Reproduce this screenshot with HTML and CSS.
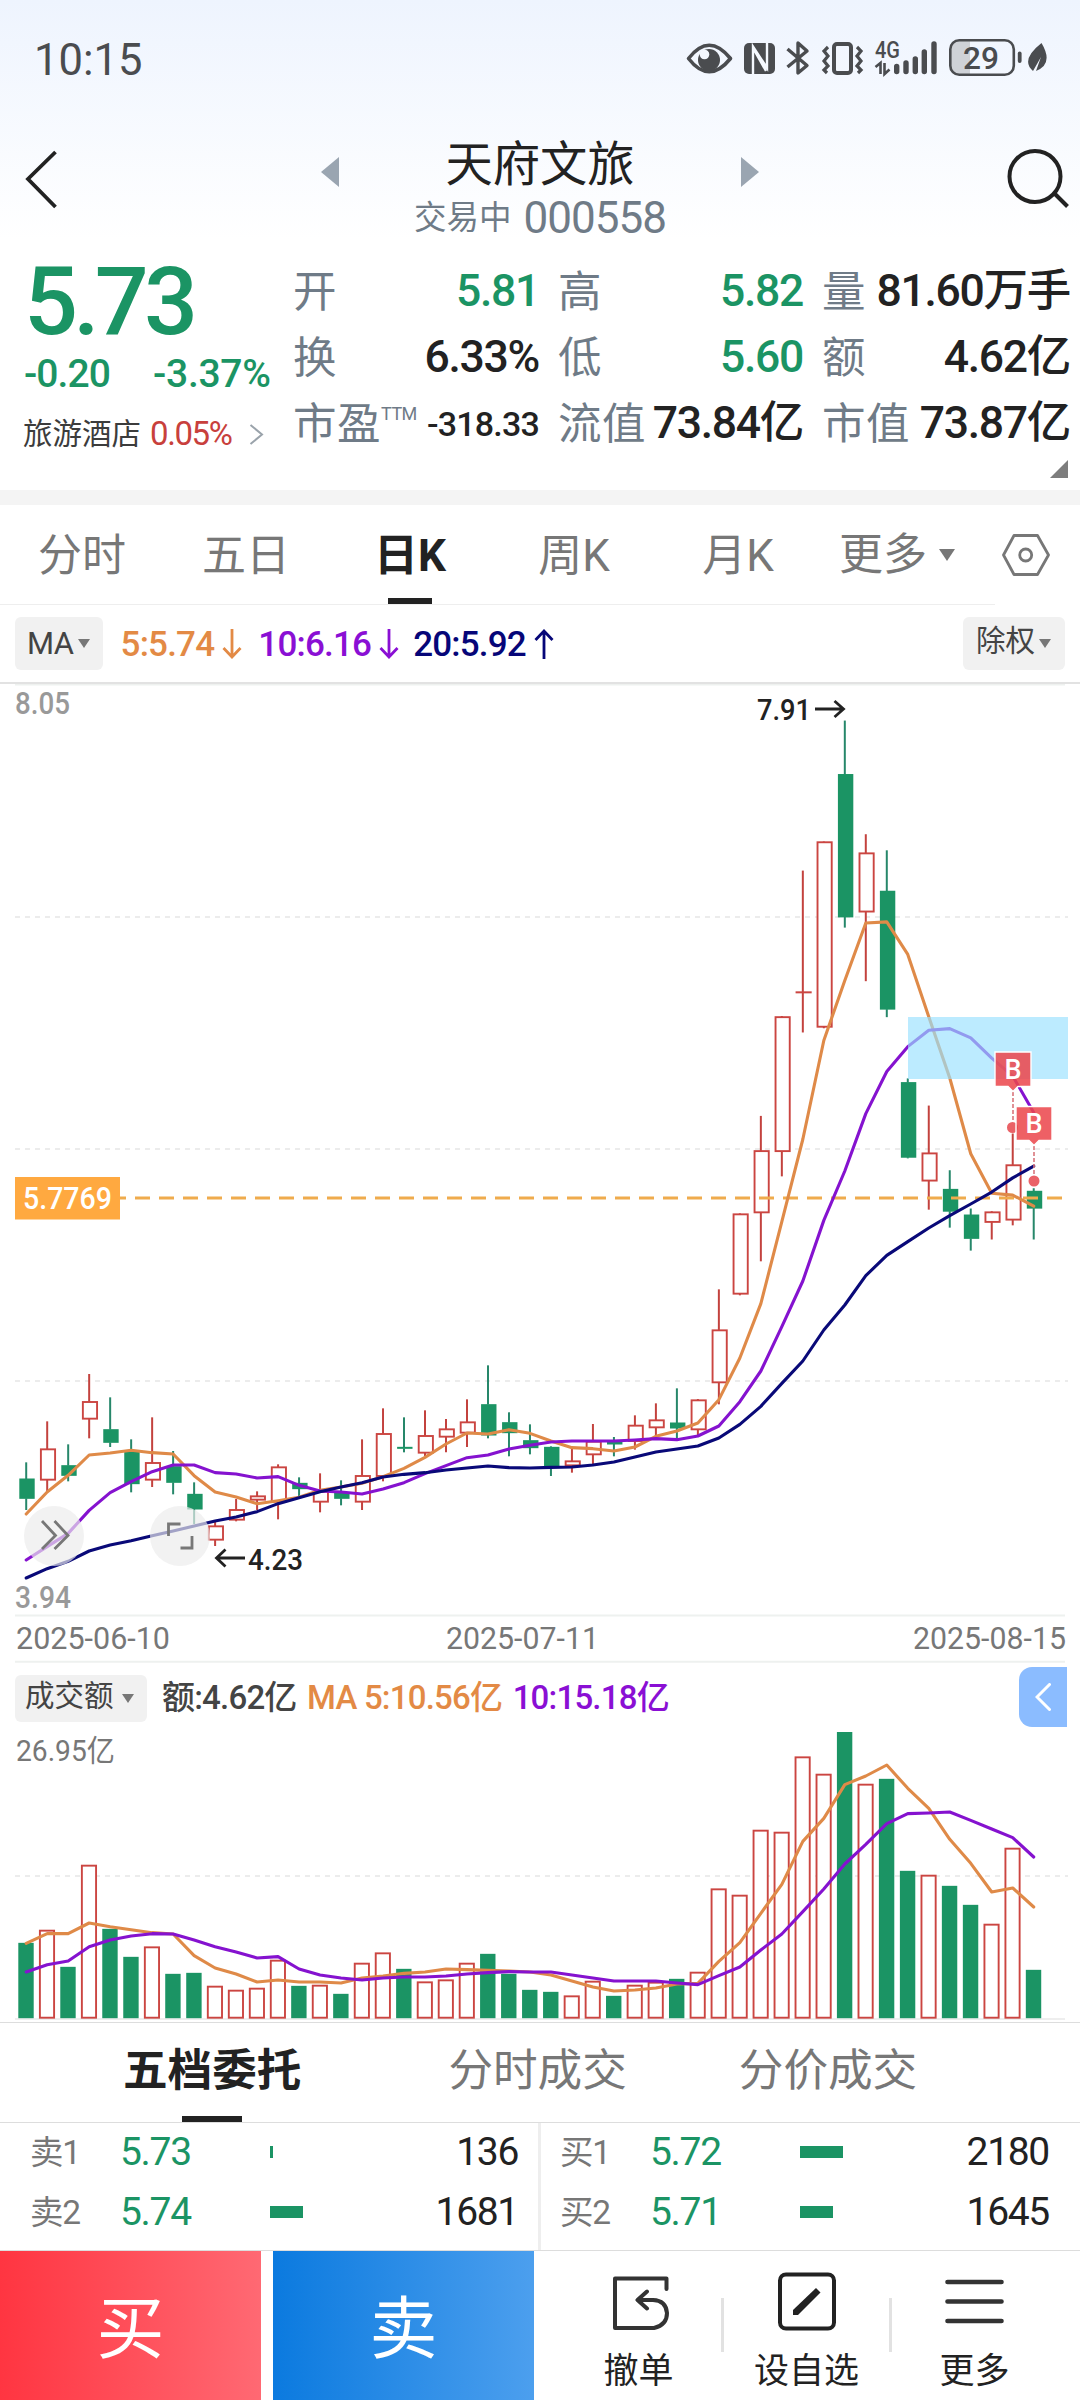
FILE: index.html
```html
<!DOCTYPE html>
<html lang="zh-CN">
<head>
<meta charset="utf-8">
<title>天府文旅 000558</title>
<link rel="stylesheet" href="styles.css">
</head>
<body>
<div class="top">
  <div class="status">
    <span class="clock">10:15</span>
    <svg class="status-icons" width="370" height="44" viewBox="682 36 370 44">
      <g fill="none" stroke="#4a4c4f" stroke-width="3.6">
        <path d="M688.500 58.500Q709 32 730.500 58.500Q709 85 688.500 58.500Z" stroke-linejoin="round"/>
        <path d="M787.500 49L807 65.500L798 73V43L807 51L787.500 67" stroke-width="3.400" stroke-linejoin="round"/>
        <rect x="834" y="44" width="17" height="29" rx="3" stroke-width="4"/>
        <path d="M828 47l-4 4 4 5-4 5 4 5-4 4 3 3M857 47l4 4-4 5 4 5-4 5 4 4-3 3" stroke-width="3.200"/>
      </g>
      <circle cx="709" cy="60" r="11" fill="#4a4c4f"/>
      <circle cx="704.500" cy="54.500" r="4.800" fill="#f4f8fe"/>
      <rect x="744" y="43" width="31" height="31" rx="5" fill="#4a4c4f"/>
      <path d="M753 74V46.500L767 68V43M753 48L766 71" fill="none" stroke="#f4f8fe" stroke-width="2.400"/>
      <text class="net" x="875" y="58" textLength="25" lengthAdjust="spacingAndGlyphs">4G</text>
      <g stroke="#4a4c4f" stroke-width="5.400" stroke-linecap="round">
        <path d="M896.700 66.500V71.500M906 63V71.500M915.300 59V71.500M924.300 52V71.500M934 44V71.500"/>
      </g>
      <path d="M875.500 67L880.500 63V74M884.500 63V74L889.500 69.500" fill="none" stroke="#4a4c4f" stroke-width="2.600"/>
      <path d="M959 41h11v34h-11q-8-1-8-9v-16q0-8 8-9z" fill="#cfd2d7"/>
      <rect x="950.300" y="40.300" width="63.500" height="34.500" rx="9" fill="none" stroke="#4a4c4f" stroke-width="2.600"/>
      <text class="batt" x="963" y="69" textLength="36" lengthAdjust="spacingAndGlyphs">29</text>
      <path d="M1019.700 53.500V61" stroke="#4a4c4f" stroke-width="3.800" stroke-linecap="round"/>
      <path d="M1041.500 43Q1054 64 1036 71L1041 57L1033 71Q1020 60 1041.500 43Z" fill="#4a4c4f"/>
    </svg>
  </div>
  <div class="header">
    <svg class="back" width="36" height="64" viewBox="24 147 36 64"><path d="M55.500 152L28 179L55.500 207" fill="none" stroke="#222" stroke-width="3.800"/></svg>
    <div class="title-nav">
      <svg width="18" height="30" viewBox="0 0 18 30"><path d="M18 0V30L0 15Z" fill="#9aa5b1"/></svg>
      <div class="title-box">
        <div class="title">天府文旅</div>
        <div class="subtitle">交易中 <span class="code">000558</span></div>
      </div>
      <svg width="18" height="30" viewBox="0 0 18 30"><path d="M0 0V30L18 15Z" fill="#9aa5b1"/></svg>
    </div>
    <svg class="search" width="66" height="64" viewBox="1004 147 66 64"><g fill="none" stroke="#222" stroke-width="4"><circle cx="1035" cy="176.500" r="25.500"/><path d="M1054 193L1067.500 206.500"/></g></svg>
  </div>
</div>

<div class="quote">
  <div class="last">
    <div class="price">5.73</div>
    <div class="change"><span>-0.20</span><span class="rate">-3.37%</span></div>
    <div class="sector"><span>旅游酒店</span><span class="pct">0.05%</span><svg width="15" height="21" viewBox="0 0 15 21"><path d="M1.500 1L13 10.500L1.500 20" fill="none" stroke="#9aa3ab" stroke-width="2"/></svg></div>
  </div>
  <div class="stats">
    <div class="stat"><span class="k">开</span><span class="v g">5.81</span></div>
    <div class="stat"><span class="k">高</span><span class="v g">5.82</span></div>
    <div class="stat"><span class="k">量</span><span class="v">81.60万手</span></div>
    <div class="stat"><span class="k">换</span><span class="v">6.33%</span></div>
    <div class="stat"><span class="k">低</span><span class="v g">5.60</span></div>
    <div class="stat"><span class="k">额</span><span class="v">4.62亿</span></div>
    <div class="stat"><span class="k">市盈<small>TTM</small></span><span class="v small">-318.33</span></div>
    <div class="stat"><span class="k">流值</span><span class="v">73.84亿</span></div>
    <div class="stat"><span class="k">市值</span><span class="v">73.87亿</span></div>
  </div>
  <svg class="corner" width="18" height="18" viewBox="0 0 18 18"><path d="M18 0V18H0Z" fill="#7d7d7d"/></svg>
</div>
<div class="band"></div>

<div class="periods">
  <div class="tab">分时</div>
  <div class="tab">五日</div>
  <div class="tab on">日K</div>
  <div class="tab">周K</div>
  <div class="tab">月K</div>
  <div class="tab more">更多<i class="tri"></i></div>
  <svg class="gear" width="52" height="46" viewBox="1000 532 52 46"><g fill="none" stroke="#777" stroke-width="2.800" stroke-linejoin="round"><path d="M1014 535.500H1037.500L1048.500 555L1037.500 574.500H1014L1003.500 555Z"/><circle cx="1025.700" cy="555" r="6"/></g></svg>
</div>

<div class="ma-row">
  <div class="chip">MA<i class="tri sm"></i></div>
  <div class="ma o">5:5.74<svg width="20" height="30" viewBox="0 0 20 30"><path d="M10 0V27M1.500 19L10 28L18.500 19" fill="none" stroke="currentColor" stroke-width="2.800"/></svg></div>
  <div class="ma p">10:6.16<svg width="20" height="30" viewBox="0 0 20 30"><path d="M10 0V27M1.500 19L10 28L18.500 19" fill="none" stroke="currentColor" stroke-width="2.800"/></svg></div>
  <div class="ma n">20:5.92<svg width="20" height="30" viewBox="0 0 20 30"><path d="M10 30V3M1.500 11L10 2L18.500 11" fill="none" stroke="currentColor" stroke-width="2.800"/></svg></div>
  <div class="chip right"><span>除权</span><i class="tri sm"></i></div>
</div>

<svg class="chart" width="1080" height="979" viewBox="0 684 1080 979">
  <g class="grid"><path d="M15 917H1068M15 1149H1068M15 1381H1068"/></g>
  <path d="M15 684.500H1065M15 1615.500H1065M15 1661.700H1065" stroke="#eef1ef" stroke-width="2"/>
  <g id="candles"></g>
  <path d="M15 1198H1062" stroke="#efab4d" stroke-width="3" stroke-dasharray="15 9"/>
  <g id="price-lines"></g>
  <rect x="908" y="1017" width="160" height="62" fill="rgba(153,224,255,.66)"/>
  <g class="mark">
    <path class="lead" d="M1013 1092V1122"/><circle cx="1012.500" cy="1127.500" r="5.500"/>
    <path class="flag" d="M995 1052H1031V1086.500H1018L1013 1091.500L1008 1086.500H995Z"/>
    <text x="1013" y="1078.500">B</text>
    <path class="lead" d="M1034 1146V1176"/><circle cx="1034" cy="1181" r="5.500"/>
    <path class="flag" d="M1016 1106.500H1052V1140.500H1039L1034 1145.500L1029 1140.500H1016Z"/>
    <text x="1034" y="1133">B</text>
  </g>
  <rect x="15" y="1177" width="105" height="42.500" fill="#ffa940"/>
  <text class="tag" x="23" y="1209" textLength="89" lengthAdjust="spacingAndGlyphs">5.7769</text>
  <text class="axis" x="15" y="714" textLength="55" lengthAdjust="spacingAndGlyphs">8.05</text>
  <text class="axis" x="15" y="1608" textLength="56" lengthAdjust="spacingAndGlyphs">3.94</text>
  <text class="ext" x="757" y="720" textLength="54" lengthAdjust="spacingAndGlyphs">7.91</text>
  <text class="ext" x="248" y="1570" textLength="55" lengthAdjust="spacingAndGlyphs">4.23</text>
  <path d="M815 709H843M834.500 701L843.500 709L834.500 717M245 1558H217M225.500 1549.500L216.500 1558L225.500 1566.500" fill="none" stroke="#222" stroke-width="2.800"/>
  <text class="date" x="16" y="1649" textLength="154" lengthAdjust="spacingAndGlyphs">2025-06-10</text>
  <text class="date" x="446" y="1649" textLength="153" lengthAdjust="spacingAndGlyphs">2025-07-11</text>
  <text class="date" x="913" y="1649" textLength="153" lengthAdjust="spacingAndGlyphs">2025-08-15</text>
  <g fill="rgba(236,236,236,.68)"><circle cx="54" cy="1536" r="30"/><circle cx="180" cy="1536" r="30"/></g>
  <path d="M42 1521L55.500 1535.500L42 1549M54.500 1521L68 1535.500L54.500 1549M168.500 1536V1524H180.500M180.500 1548H192V1536" fill="none" stroke="#777" stroke-width="2.800"/>
</svg>

<div class="vol-head">
  <div class="chip vol"><span>成交额</span><i class="tri sm"></i></div>
  <span class="amt">额:4.62亿</span><span class="amt o">MA 5:10.56亿</span><span class="amt p">10:15.18亿</span>
  <div class="drawer"><svg width="16" height="28" viewBox="0 0 16 28"><path d="M14.500 1.500L2 14L14.500 26.500" fill="none" stroke="#fff" stroke-width="3" stroke-linecap="round"/></svg></div>
</div>
<svg class="chart" width="1080" height="290" viewBox="0 1732 1080 290">
  <g class="grid"><path d="M15 1876H1068"/></g>
  <path d="M15 2019H1065" stroke="#eee" stroke-width="2"/>
  <g id="volumes"></g>
  <g id="volume-lines"></g>
  <text class="volmax" x="16" y="1761" textLength="99" lengthAdjust="spacingAndGlyphs">26.95亿</text>
</svg>

<div class="book-tabs">
  <div class="btab on">五档委托</div><div class="btab b2">分时成交</div><div class="btab b3">分价成交</div>
</div>
<div class="book">
  <div class="side">
    <div class="order"><span class="lv">卖1</span><span class="px">5.73</span><span class="bar"><i style="width:3px"></i></span><span class="qty">136</span></div>
    <div class="order"><span class="lv">卖2</span><span class="px">5.74</span><span class="bar"><i style="width:33px"></i></span><span class="qty">1681</span></div>
  </div>
  <div class="side buy">
    <div class="order"><span class="lv">买1</span><span class="px">5.72</span><span class="bar"><i style="width:43px"></i></span><span class="qty">2180</span></div>
    <div class="order"><span class="lv">买2</span><span class="px">5.71</span><span class="bar"><i style="width:33px"></i></span><span class="qty">1645</span></div>
  </div>
</div>

<div class="actions">
  <div class="btn buy-btn">买</div>
  <div class="btn sell-btn">卖</div>
  <div class="tools">
    <div class="tool"><svg width="60" height="62" viewBox="610 2271 60 62"><g fill="none" stroke="#333" stroke-width="4" stroke-linecap="round" stroke-linejoin="round"><path d="M667.500 2289V2278.500H616V2328H655Q668 2325 668 2313Q667 2300.500 654 2300H639M648 2291.500L638.500 2300L648 2308.500"/></g></svg><span>撤单</span></div>
    <i class="sep"></i>
    <div class="tool"><svg width="60" height="62" viewBox="777 2271 60 62"><rect x="780" y="2274.500" width="54" height="54" rx="6" fill="none" stroke="#222" stroke-width="4"/><path d="M793 2315V2310L816 2288L820.500 2292.500L798 2315Z" fill="#222"/></svg><span>设自选</span></div>
    <i class="sep"></i>
    <div class="tool"><svg width="60" height="62" viewBox="944.500 2271 60 62"><path d="M947 2282H1001M947 2301.500H1001M947 2321H1001" stroke="#333" stroke-width="4.600" stroke-linecap="round"/></svg><span>更多</span></div>
  </div>
</div>
<script src="chart.js"></script>
</body>
</html>
```
FILE: styles.css
```css
* { box-sizing: border-box; }
body {
  margin: 0;
  width: 1080px;
  height: 2400px;
  overflow: hidden;
  background: #fff;
  color: #222;
  font-family: Roboto, "Noto Sans CJK SC", sans-serif;
}
svg { display: block; flex: none; }
.top { height: 250px; background: linear-gradient(#eef4fe, #fff 240px); }
.status { height: 84px; display: flex; justify-content: space-between; padding: 36px 28px 0 34px; }
.clock { font-size: 43.5px; line-height: 50px; color: #4a4c4f; }
.net { font-size: 23px; font-weight: 500; fill: #4a4c4f; }
.batt { font-size: 32px; font-weight: 500; fill: #4a4c4f; }
.header { height: 166px; display: flex; justify-content: space-between; padding: 0 10px 0 24px; }
.back, .search { margin-top: 63px; }
.title-nav { display: flex; width: 438px; justify-content: space-between; margin-left: 16px; }
.title-nav > svg { margin-top: 73px; }
.title-box { text-align: center; margin-top: 50px; }
.title { font-size: 47.3px; line-height: 62px; height: 59px; }
.subtitle { font-size: 32.5px; line-height: 50px; color: #6f7b87; white-space: nowrap; display: flex; align-items: center; justify-content: center; gap: 12px; }
.code { font-size: 44px; letter-spacing: -1px; }

.quote { height: 240px; display: flex; position: relative; }
.last { width: 293px; padding-left: 24px; color: #1b9464; }
.price { font-size: 95px; line-height: 103px; height: 102px; font-weight: 500; letter-spacing: -4.8px; }
.change { display: flex; gap: 43px; font-size: 39px; font-weight: 500; line-height: 44px; letter-spacing: -.9px; }
.rate { letter-spacing: -.3px; }
.sector { display: flex; align-items: center; font-size: 29.5px; line-height: 44px; margin-top: 16px; margin-left: -1px; color: #3c3c3c; }
.pct { color: #c8403c; font-size: 33px; letter-spacing: -1.4px; margin: 0 17px 0 9px; }
.stats { display: grid; grid-template-columns: 245px 244px 247px; column-gap: 20px; grid-auto-rows: 66px; padding-top: 8px; }
.stat { display: flex; justify-content: space-between; line-height: 66px; white-space: nowrap; }
.k { font-size: 43.5px; color: #6f7b87; padding-top: 2px; letter-spacing: .5px; }
.k small { font-size: 18px; vertical-align: 19px; line-height: 1; letter-spacing: -.5px; }
.v { font-size: 44.5px; font-weight: 500; letter-spacing: -1.3px; margin-right: -1px; }
.v.g { color: #1b9464; }
.v.small { font-size: 34px; letter-spacing: -.8px; padding-top: 1px; }
.corner { position: absolute; right: 12px; bottom: 12px; }
.band { height: 15px; background: #f4f4f4; }

.periods { height: 100px; display: flex; align-items: center; background: linear-gradient(#eee, #eee) 0 99px / 995px 1px no-repeat; }
.tab { width: 164px; height: 100px; line-height: 102px; text-align: center; font-size: 44px; color: #777; position: relative; }
.tab.on { font-weight: 700; color: #222; }
.tab.on::after { content: ""; position: absolute; left: 60px; bottom: 1px; width: 44px; height: 6px; background: #222; }
.tab.more { display: flex; align-items: center; justify-content: center; gap: 12px; padding-right: 10px; }
.tri { display: block; flex: none; border: 8.5px solid transparent; border-top: 12px solid #777; border-bottom: 0; }
.tri.sm { border-width: 9px 6.5px 0; }
.gear { margin-left: 16px; }

.ma-row { height: 79px; display: flex; align-items: center; padding: 0 15px; border-bottom: 2px solid #e2e2e2; }
.chip { height: 53px; background: #f1f1f1; border-radius: 6px; display: flex; align-items: center; gap: 4px; padding: 0 13px 0 12px; font-size: 31px; color: #444; letter-spacing: -.5px; }
.chip span { line-height: 40px; margin-top: -5px; }
.chip.right { margin-left: auto; width: 102px; font-size: 29.5px; padding: 0 12px 0 13px; letter-spacing: 0; }
.ma { display: flex; align-items: center; gap: 8px; font-size: 35px; font-weight: 500; letter-spacing: -.8px; margin-left: 16px; padding-top: 1px; }
.chip + .ma { margin-left: 18px; }
.ma.n { margin-left: 14px; }
.o { color: #e38a45; }
.p { color: #8a0fd4; }
.n { color: #060678; }

.grid { fill: none; stroke: #ececec; stroke-width: 1.8; stroke-dasharray: 5 5; }
.axis { font-size: 31px; font-weight: 500; fill: #999; }
.ext { font-size: 30px; font-weight: 500; fill: #222; }
.date { font-size: 30.5px; fill: #777; }
.tag { font-size: 31px; font-weight: 500; fill: #fff; }
.volmax { font-size: 29.5px; fill: #777; }
.mark .flag { fill: rgba(235, 70, 76, .86); stroke: #fff; stroke-width: 1.4; }
.mark circle { fill: #ea6267; }
.mark .lead { stroke: #d9767c; stroke-width: 1.6; stroke-dasharray: 4 2; }
.mark text { font-size: 27px; font-weight: 500; fill: #fff; text-anchor: middle; }
.up { fill: #fff; stroke: #cb4541; stroke-width: 1.9; }
.wick { stroke-width: 2; }
.wick.r { stroke: #c3423e; }
.wick.d { stroke: #26876a; }
.down { fill: #1b9464; }
.line { fill: none; stroke-width: 3.1; stroke-linejoin: round; stroke-linecap: round; }
.line.ma5 { stroke: #df8a48; }
.line.ma10 { stroke: #8512cf; }
.line.ma20 { stroke: #090978; }

.vol-head { height: 69px; display: flex; align-items: center; padding: 0 13px 0 15px; }
.chip.vol { height: 47px; font-size: 29.5px; gap: 8px; padding: 0 13px 0 10px; margin-right: 15px; margin-top: 2px; letter-spacing: 0; width: 132px; }
.amt { font-size: 33px; font-weight: 500; letter-spacing: -.8px; margin-right: 10.5px; line-height: 40px; white-space: nowrap; }
.amt:not(.o):not(.p) { color: #444; }
.drawer { margin-left: auto; width: 48px; height: 60px; margin-top: -1px; background: #8bbcff; border-radius: 13px 0 0 13px; display: flex; align-items: center; justify-content: center; }

.book-tabs { height: 101px; display: flex; border-top: 1px solid #ddd; border-bottom: 1px solid #ddd; padding-left: 123px; }
.btab { font-size: 44.6px; line-height: 97px; color: #777; position: relative; }
.btab.on { color: #222; font-weight: 700; }
.btab.on::after { content: ""; position: absolute; left: 59px; bottom: 0; width: 60px; height: 6px; background: #222; }
.b2 { margin-left: 147px; }
.b3 { margin-left: 112px; }
.book { height: 128px; display: flex; border-bottom: 1px solid #ddd; }
.side { width: 541px; border-right: 3px solid #eee; padding: 0 20px 0 30px; }
.side.buy { width: 539px; border: 0; padding: 0 31px 0 19px; }
.order { display: grid; grid-template-columns: 90px 150px 60px 1fr; align-items: center; height: 60px; line-height: 55px; margin-top: -1px; margin-bottom: 1px; font-size: 39px; letter-spacing: -1.3px; }
.lv { color: #777; font-size: 33.5px; }
.px { color: #1b9464; }
.bar i { display: block; height: 12px; background: #1b9464; }
.qty { text-align: right; }

.actions { height: 149px; display: flex; }
.btn { width: 261px; font-size: 68px; line-height: 158px; text-align: center; color: #fff; }
.buy-btn { background: linear-gradient(90deg, #ff3541, #ff6973); margin-right: 12px; }
.sell-btn { background: linear-gradient(90deg, #0b7adf, #4c9fee); }
.tools { display: flex; padding-left: 22px; }
.tool { width: 165px; display: flex; flex-direction: column; align-items: center; padding-top: 20px; font-size: 35px; line-height: 46px; }
.tool span { margin-top: 16px; }
.sep { width: 3px; height: 54px; margin-top: 47px; background: #e2e2e2; }
```
FILE: chart.js
```js
const cx = i => 26.2 + 20.99 * i;

// Blocks of plotted values share an origin and a unit: y = origin + value / unit.
const block = (origin, unit, rows) =>
  rows.map(r => Array.isArray(r)
    ? [r[0], ...r.slice(1).map(v => origin + v / unit)]
    : origin + r / unit);

// [direction, high, body top, body bottom, low]
const candles = [
  ...block(1320, 3, [
    ['d',427,477,535,570], ['r',304,388,479,513], ['d',373,437,466,484], ['r',162,246,296,355],
    ['d',232,329,367,381], ['d',358,395,491,517], ['r',292,429,479,501], ['d',393,440,487,523],
    ['d',487,523,567,612], ['r',606,619,659,678], ['r',537,570,599,604], ['r',514,529,539,570],
    ['r',433,442,545,598], ['d',472,490,506,530], ['r',460,515,545,577], ['d',481,518,535,556],
    ['r',358,468,545,570], ['r',265,342,468,484], ['d',292,382,385,397], ['r',271,348,398,408],
    ['r',297,328,350,397], ['r',238,307,338,381], ['d',136,254,345,355], ['d',277,308,338,409],
    ['d',313,362,383,403]]),
  ...block(1180, 3, [
    ['d',799,802,857,888], ['r',805,844,856,878], ['r',732,785,823,857], ['d',771,786,792,829],
    ['r',706,737,783,809], ['r',670,721,742,771], ['d',625,729,744,780], ['r',657,661,748,766],
    ['r',328,451,607,673], ['r',100,103,341,346]]),
  ...block(680, 2.613, [
    ['r',1139,1231,1391,1519], ['r',878,881,1231,1297], ['r',498,816,816,921], ['r',422,424,906,910],
    ['d',106,247,619,647], ['r',403,453,605,787], ['d',445,552,860,881], ['d',1041,1052,1247,1250],
    ['r',1112,1237,1308,1384], ['d',1281,1331,1388,1431], ['d',1381,1398,1459,1491],
    ['r',1388,1391,1416,1462], ['r',1185,1268,1410,1425], ['d',1328,1336,1380,1462]])
];

const ma5 = [
  ...block(1320, 3, [582,516,466,405,399,391,398,402,467,516,531,551,542,532,511,501,490,470,445,412,372,339,342,329,340]),
  ...block(1180, 3, [783,803,806,813,801,769,753,729,659,534,371]),
  ...block(680, 2.613, [1415,1200,942,785,635,632,717,880,1040,1238,1341,1346,1375])];
const ma10 = [
  ...block(1320, 3, [720,680,640,571,518,485,455,435,435,458,462,474,470,496,513,516,522,507,488,461,437,413,405,387,376]),
  ...block(1180, 3, [786,783,783,783,780,776,779,768,738,665,573,440,303]),
  ...block(680, 2.613, [1412,1283,1133,1023,958,915,911,935,988,1035,1130])];
const ma20 = [
  ...block(1320, 3, [774,746,724,693,675,662,647,633,618,603,591,575,551,533,515,501,488,471,463,458,450,444,438,443,444]),
  ...block(1180, 3, [862,861,855,846,831,816,807,798,774,733,679,610,543,450,375,287,226,185,144,107,72]),
  ...block(680, 2.613, [1338,1301,1270])];

const volumes = block(1650, 3, [
  880,842,952,647,838,922,892,973,970,1010,1022,1016,932,1009,1007,1033,941,910,958,997,991,941,913,973,1021,
  1027,1039,995,1039,1007,998,988,968,718,737,542,548,322,374,247,404,388,664,677,709,766,824,596,961]);
const vol5 = block(1650, 3, [
  880,851,851,819,830,839,848,852,917,954,972,996,990,996,996,999,984,978,970,966,957,959,961,963,966,
  975,993,1011,1023,1020,1014,1002,1000,934,878,790,703,574,505,404,378,345,415,475,568,640,726,714,771]);
const vol10 = block(1650, 3, [
  966,944,933,890,870,858,851,852,870,890,906,924,920,957,975,984,990,984,981,981,978,972,968,965,966,
  966,975,984,993,993,993,999,1004,977,951,900,852,785,717,642,583,521,491,489,486,511,537,563,621]);

const wick = (x, a, b, dir) => `<path class="wick ${dir}" d="M${x} ${a}V${b}"/>`;
const body = (x, a, b, dir) => dir === 'r'
  ? `<rect class="up" x="${x - 7}" y="${a}" width="14.2" height="${Math.max(b - a, 0.1)}"/>`
  : `<rect class="down" x="${x - 7.6}" y="${a - 0.5}" width="15.4" height="${b - a + 1}"/>`;
const line = (ys, cls) =>
  `<polyline class="line ${cls}" points="${ys.map((y, i) => cx(i) + ',' + y).join(' ')}"/>`;

document.getElementById('candles').innerHTML = candles.map(([dir, hi, top, bot, lo], i) =>
  wick(cx(i), hi, top, dir) + wick(cx(i), bot, lo, dir) + body(cx(i) + 0.7, top, bot, dir)).join('');
document.getElementById('price-lines').innerHTML =
  line(ma5, 'ma5') + line(ma10, 'ma10') + line(ma20, 'ma20');
document.getElementById('volumes').innerHTML = volumes.map((y, i) =>
  body(cx(i) - 0.3, y, 2017.7, candles[i][0])).join('');
document.getElementById('volume-lines').innerHTML = line(vol5, 'ma5') + line(vol10, 'ma10');
```
